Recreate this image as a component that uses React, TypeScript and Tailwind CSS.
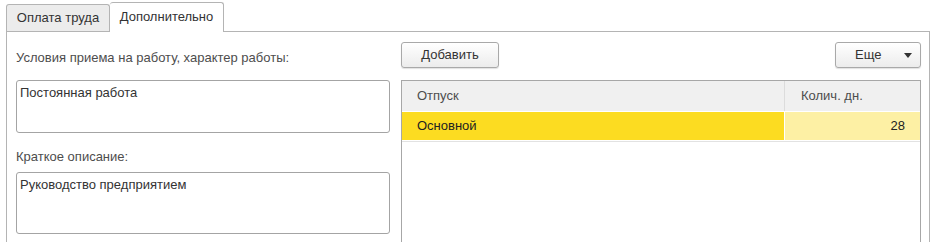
import { ReactNode } from 'react';

const Btn = ({ children, className = '' }: { children: ReactNode; className?: string }) => (
  <button
    className={`h-[26px] rounded-[3px] border border-[#a9a9a9] bg-gradient-to-b from-white to-[#ececec] text-[13px] text-[#333] shadow-[0_1px_1px_rgba(0,0,0,0.12)] ${className}`}
  >
    {children}
  </button>
);

const Memo = ({ text, height }: { text: string; height: string }) => (
  <div className={`${height} rounded-[3px] border border-[#a4a4a4] px-[3px] pt-[4px] text-[13px] leading-[15px] text-[#333]`}>{text}</div>
);

const App = () => {
  return (
    <div
      className="h-[242px] w-[940px] overflow-hidden bg-white pl-[6px] pt-[2px]"
      style={{ fontFamily: '"Liberation Sans", Arial, sans-serif' }}
    >
      <div className="relative z-10 flex h-[29px] items-end">
        <div className="flex h-[27px] w-[104px] items-center justify-center rounded-t-[3px] border border-b-0 border-[#b4b4b4] bg-[#ececec] text-[13px] text-[#333]">
          Оплата труда
        </div>
        <div className="-mb-px flex h-[30px] w-[114px] items-center justify-center rounded-t-[3px] border border-b-0 border-l-0 border-[#b4b4b4] bg-white pb-px text-[13px] text-[#333]">
          Дополнительно
        </div>
      </div>
      <div className="flex h-[240px] w-[924px] gap-[11px] border border-b-0 border-[#b4b4b4] pl-[9px] pr-[8px] pt-[10px]">
        <div className="flex w-[374px] flex-col">
          <div className="mt-[9px] h-[14px] text-[13px] leading-[14px] text-[#4d4d4d]">Условия приема на работу, характер работы:</div>
          <div className="mt-[15px]">
            <Memo text="Постоянная работа" height="h-[53px]" />
          </div>
          <div className="mt-[17px] h-[14px] text-[13px] leading-[14px] text-[#4d4d4d]">Краткое описание:</div>
          <div className="mt-[8px]">
            <Memo text="Руководство предприятием" height="h-[62px]" />
          </div>
        </div>
        <div className="flex flex-1 flex-col">
          <div className="flex justify-between">
            <Btn className="w-[98px]">Добавить</Btn>
            <Btn className="flex w-[86px] items-center pl-[19px] pr-[8px]">
              <span>Еще</span>
              <svg width="8" height="5" viewBox="0 0 8 5" className="ml-auto">
                <path d="M0 0h8L4 5z" fill="#333" />
              </svg>
            </Btn>
          </div>
          <div className="mt-[12px] h-[200px] border border-b-0 border-[#a7a7a7] text-[13px]">
            <div className="flex h-[30px] bg-[#f0f0f0] text-[#4d4d4d]">
              <div className="flex flex-1 items-center border-r border-[#dcdcdc] pl-[15px]">Отпуск</div>
              <div className="flex w-[135px] items-center pl-[16px]">Колич. дн.</div>
            </div>
            <div className="flex h-[29px] border-t border-white text-[#222]">
              <div className="flex flex-1 items-center border-r border-white bg-[#fcdc21] pl-[15px]">Основной</div>
              <div className="flex w-[135px] items-center justify-end bg-[#fdf0a4] pr-[15px]">28</div>
            </div>
            <div className="mt-[1px] h-px bg-[#e2e2e2]" />
          </div>
        </div>
      </div>
    </div>
  );
};

export default App;
